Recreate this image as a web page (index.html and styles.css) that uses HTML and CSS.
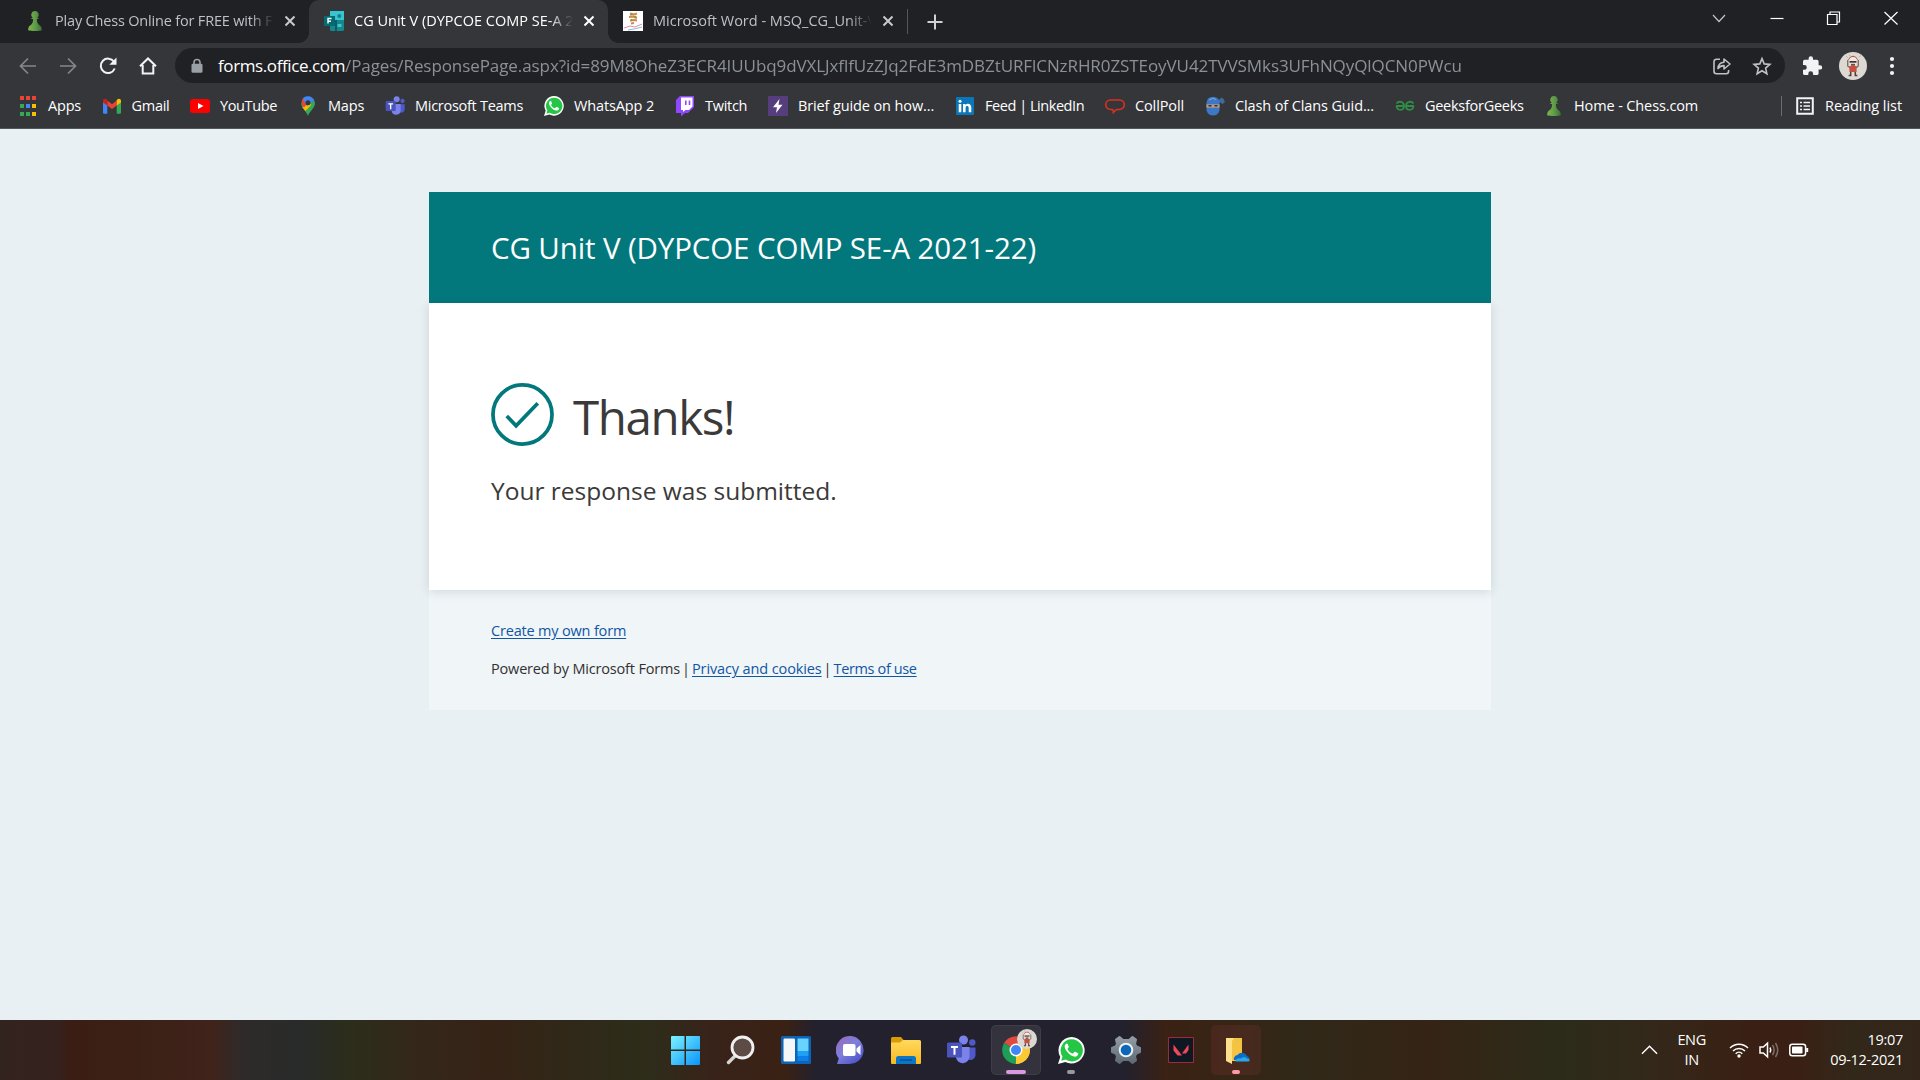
FILE: index.html
```html
<!DOCTYPE html>
<html lang="en">
<head>
<meta charset="utf-8">
<title>CG Unit V (DYPCOE COMP SE-A 2021-22)</title>
<link rel="stylesheet" href="styles.css">
</head>
<body>
<svg class="defs" width="0" height="0" aria-hidden="true">
  <defs>
    <linearGradient id="pawnFill" x1="0" x2="1"><stop offset="0" stop-color="#81b64c"/><stop offset=".55" stop-color="#5d9948"/><stop offset="1" stop-color="#3d6e33"/></linearGradient>
    <linearGradient id="winFill" x1="0" y1="0" x2="1" y2="1"><stop offset="0" stop-color="#7bf3ff"/><stop offset="1" stop-color="#0a94fa"/></linearGradient>
    <linearGradient id="chatFill" x1="0" y1="0" x2=".8" y2="1"><stop offset="0" stop-color="#9a68b4"/><stop offset=".5" stop-color="#7f7fdc"/><stop offset="1" stop-color="#4a50c8"/></linearGradient>
    <linearGradient id="folderFill" x1="0" y1="0" x2="0" y2="1"><stop offset="0" stop-color="#ffd95e"/><stop offset="1" stop-color="#f9b91e"/></linearGradient>
    <linearGradient id="gearFill" x1="0" y1="0" x2="0" y2="1"><stop offset="0" stop-color="#929da5"/><stop offset="1" stop-color="#5d6a73"/></linearGradient>
    <symbol id="pawn" viewBox="0 0 20 20">
      <path fill="url(#pawnFill)" d="M10 0a3.7 3.7 0 0 0-2.3 6.6L5.8 8.1h2.3c0 3-.5 4.700-3 6.500C3.700 15.700 3.200 17 3.200 19c0 .6 2.800 1 6.800 1s6.800-.4 6.800-1c0-2-.5-3.300-1.900-4.400-2.500-1.800-3-3.500-3-6.500h2.300l-1.900-1.500A3.700 3.700 0 0 0 10 0z"/>
    </symbol>
    <symbol id="teams" viewBox="0 0 30 30">
      <circle cx="26.300" cy="7.500" r="3.200" fill="#5059c9"/><path fill="#5059c9" d="M21 12.500h8.500v8a5 5 0 0 1-8.500 3z"/>
      <circle cx="17.500" cy="5" r="4.500" fill="#7b83eb"/><path fill="#7b83eb" d="M10 12h13.500v9.500a6.800 6.800 0 0 1-13.500 1z"/>
      <rect x="1" y="7.500" width="15" height="15" rx="1.200" fill="#4b53bc"/><path fill="#fff" d="M5 11h7v1.900H9.500v6.800h-2v-6.800H5z"/>
    </symbol>
    <symbol id="whatsapp" viewBox="0 0 24 24">
      <path fill="#fff" d="M12.200 0A11.800 11.800 0 0 0 2 17.700L0 24l6.500-1.700A11.800 11.800 0 1 0 12.200 0z"/>
      <path fill="#25c646" d="M12.200 2.100A9.800 9.800 0 0 0 4 17.300l-1.100 3.900 4-1.100A9.800 9.800 0 1 0 12.200 2.100z"/>
      <path fill="#fff" d="M8.600 6.300c-.4-.8-1.300-.5-1.900.2-1.200 1.300-.8 3.100 0 4.600 1.700 3 4 5.200 7.400 6.300 1.700.5 3.600-.5 3.900-2.200.1-.7-.1-.8-.6-1l-2.100-1c-.4-.2-.7-.1-1 .3l-.8 1c-.2.300-.500.300-.900.100-1.800-.8-3-1.900-4-3.600-.2-.4-.1-.6.200-.9l.7-.9c.2-.3.100-.5 0-.8z"/>
    </symbol>
    <symbol id="avatar" viewBox="0 0 28 28">
      <circle cx="14" cy="14" r="14" fill="#dcd8d2"/>
      <path d="M7 4l2 2M10 2.500l1 1.500M20 5l2-1.500" stroke="#bdb8b0" stroke-width="1"/>
      <path d="M9.500 8q1-3.500 4.500-3.800 3.500.3 4.500 3.800" fill="none" stroke="#b9473d" stroke-width="1"/>
      <circle cx="14" cy="9.300" r="4" fill="#efe9e4"/><path d="M10.500 9h7v1.700h-7z" fill="#42333a"/><path d="M12 11.800h4v2h-4z" fill="#7a4a3d"/>
      <path d="M8.700 8v6l2.500 2M19.300 8v6l-2.500 2" stroke="#7d6a66" stroke-width="1.300" fill="none"/>
      <path d="M10.400 14h7.200v6h-7.200z" fill="#c7503f"/>
      <path d="M11.700 20v3.500h-2M16.300 20v3.500h2" stroke="#563d3a" stroke-width="1.500" fill="none"/>
    </symbol>
  </defs>
</svg>

<header class="tabstrip">
  <div class="tab">
    <svg class="fav" viewBox="0 0 20 20"><use href="#pawn"/></svg>
    <span class="tab-title snug-2">Play Chess Online for FREE with F</span>
    <svg class="tab-close" viewBox="0 0 20 20"><path d="M5.500 5.500l9 9m0-9l-9 9"/></svg>
  </div>
  <div class="tab active">
    <svg class="fav" viewBox="0 0 20 20"><path fill="#37c6d0" d="M6 0h14v9H6z"/><path fill="#16878d" d="M6 9h14v9.500a1.500 1.500 0 0 1-1.500 1.500h-11A1.500 1.500 0 0 1 6 18.500z"/><path fill="#0c5c63" d="M11 9h2v11h-2z"/><circle cx="15.300" cy="5" r="2" fill="#158087"/><path fill="#37c6d0" d="M13.500 13h4v3h-4z"/><path fill="#036c70" d="M0 5h11v10H0z"/><path d="M4 12.500v-5h3.500M4 10.200h3" fill="none" stroke="#fff" stroke-width="1.400"/></svg>
    <span class="tab-title">CG Unit V (DYPCOE COMP SE-A 2</span>
    <svg class="tab-close" viewBox="0 0 20 20"><path d="M5.500 5.500l9 9m0-9l-9 9"/></svg>
  </div>
  <div class="tab">
    <svg class="fav" viewBox="0 0 20 20"><path fill="#fff" d="M0 0h20v20H0z"/><path d="M7 2.500l4 1 3-1M6 6l4-.5 4 1.500M7 9.500l4-.5 3 .5M8 12.500l3-.5" stroke="#c98a4a" stroke-width="1.900" fill="none"/><path d="M9 2.500l-1.500 2M13 5l-1.500 2M9 8l-1 2" stroke="#8a9a3a" stroke-width="1.300"/><path d="M1 17l6-2 5 1 7-3" stroke="#e58aa8" fill="none"/><path d="M5 19l6-1 8-2" stroke="#7fc0d8" fill="none"/></svg>
    <span class="tab-title">Microsoft Word - MSQ_CG_Unit-V</span>
    <svg class="tab-close" viewBox="0 0 20 20"><path d="M5.500 5.500l9 9m0-9l-9 9"/></svg>
  </div>
  <i class="tab-rule"></i>
  <svg class="new-tab" viewBox="0 0 20 20"><path d="M10 2.500v15M2.500 10h15"/></svg>
  <div class="window-controls">
    <svg viewBox="0 0 16 16"><path d="M2 5l6 6.500L14 5" stroke="#c4c5c8"/></svg>
    <svg viewBox="0 0 16 16"><path d="M1.500 8.500h13"/></svg>
    <svg viewBox="0 0 16 16"><path d="M1.500 4.500h9.500v10H1.500zM4 4.500v-2.500h9.500v10H11"/></svg>
    <svg viewBox="0 0 16 16"><path d="M1.500 2l13 12.500m0-12.500L1.500 14.500"/></svg>
  </div>
</header>

<nav class="toolbar">
  <svg class="nav-btn dim" viewBox="0 0 20 20"><path d="M18 10H2.500M10 2.500L2.500 10l7.500 7.500"/></svg>
  <svg class="nav-btn dim" viewBox="0 0 20 20"><path d="M2 10h15.500M10 2.500l7.500 7.500-7.500 7.500"/></svg>
  <svg class="nav-btn" viewBox="0 0 20 20"><path d="M16.700 12.500A7.200 7.200 0 1 1 16 5.800"/><path d="M18.500 1.500v7.200h-7.200z" fill="#f1f3f4" stroke="none"/></svg>
  <svg class="nav-btn" viewBox="0 0 20 20"><path d="M2 10.200L10 2.500l8 7.700M4.700 9v8.500h10.600V9"/></svg>
  <div class="omnibox">
    <svg class="lock" viewBox="0 0 14 16"><path d="M4 7V4.500a3 3 0 0 1 6 0V7" fill="none" stroke="#9aa0a6" stroke-width="1.600"/><rect x="1.500" y="5.800" width="11" height="9" rx="1.300" fill="#9aa0a6"/></svg>
    <span class="url"><span class="host">forms.office.com</span><span class="path">/Pages/ResponsePage.aspx?id=89M8OheZ3ECR4IUUbq9dVXLJxflfUzZJq2FdE3mDBZtURFlCNzRHR0ZSTEoyVU42TVVSMks3UFhNQyQlQCN0PWcu</span></span>
    <svg class="omni-icon" viewBox="0 0 20 20"><path d="M8 3.200H4.500a2.500 2.500 0 0 0-2.500 2.500v9.600a2.500 2.500 0 0 0 2.500 2.500h9.600a2.500 2.500 0 0 0 2.500-2.500V14"/><path d="M6 12.500c.3-4 2.500-6 6-6.200V3l6 5-6 5V9.600c-2.700 0-4.500.8-6 2.900z" stroke-linejoin="round"/></svg>
    <svg class="omni-icon" viewBox="0 0 20 20"><path d="M10 2.600l2.200 5.300 5.700.5-4.300 3.700 1.300 5.600-4.900-3-4.900 3 1.300-5.600-4.300-3.700 5.700-.5z"/></svg>
  </div>
  <svg class="puzzle" viewBox="0 0 22 22"><path fill="#f1f3f4" d="M19 10.200h-1.400V6.400a1.700 1.700 0 0 0-1.700-1.700H12V3.400a2.200 2.200 0 0 0-4.400 0v1.300H3.700A1.700 1.700 0 0 0 2 6.400V10h1.400a2.400 2.400 0 0 1 0 4.800H2v3.600a1.700 1.700 0 0 0 1.700 1.700h3.600v-1.400a2.400 2.400 0 0 1 4.800 0v1.400h3.800a1.700 1.700 0 0 0 1.700-1.700v-3.800H19a2.200 2.200 0 0 0 0-4.400z"/></svg>
  <svg class="profile" viewBox="0 0 28 28"><use href="#avatar"/></svg>
  <svg class="kebab" viewBox="0 0 6 20"><circle cx="3" cy="3" r="2.100"/><circle cx="3" cy="10" r="2.100"/><circle cx="3" cy="17" r="2.100"/></svg>
</nav>

<nav class="bookmarks">
  <a class="bm snug-2"><svg viewBox="0 0 20 20"><path fill="#ea4335" d="M2 0h4v4H2zM8 0h4v4H8zM14 0h4v4h-4z"/><path fill="#34a853" d="M2 8h4v4H2zM2 16h4v4H2zM8 16h4v4H8z"/><path fill="#4285f4" d="M8 8h4v4H8z"/><path fill="#fbbc04" d="M14 8h4v4h-4zM14 16h4v4h-4z"/></svg>Apps</a>
  <a class="bm snug-3"><svg viewBox="0 0 20 20"><path fill="#4285f4" d="M1 5v11.500c0 .8.600 1.300 1.300 1.300h3V8.500z"/><path fill="#34a853" d="M14.700 8.500v9.300h3c.7 0 1.300-.5 1.300-1.300V5z"/><path fill="#ea4335" d="M5.300 4.500L10 8.200l4.700-3.700v5L10 13l-4.700-3.500z"/><path fill="#c5221f" d="M1 5c0-2 2.200-2.800 3.700-1.500l.6.500v5.500L1 6.400z"/><path fill="#fbbc04" d="M19 5c0-2-2.200-2.800-3.700-1.500l-.6.500v5.500L19 6.400z"/></svg>Gmail</a>
  <a class="bm snug-4"><svg viewBox="0 0 20 20"><rect y="3" width="20" height="14" rx="3" fill="#f00"/><path fill="#fff" d="M8 7l5.500 3L8 13z"/></svg>YouTube</a>
  <a class="bm snug-2"><svg viewBox="0 0 20 20"><path fill="#34a853" d="M10 20c1-4.500 6.800-7 6.800-13H3.200C3.200 13 9 15.500 10 20z"/><path fill="#fbbc04" d="M4.500 11.500L12 3l2.500 4.500L7.500 15z"/><path fill="#ea4335" d="M4.800 2.500L10 7 6 11.500C3.500 9 2.700 5.500 4.800 2.500z"/><path fill="#4285f4" d="M4.800 2.500A6.800 6.800 0 0 1 16.300 4.500L9 10z"/><path fill="#34a853" d="M16.300 4.500c.9 2 .6 4.500-.8 6.500L12 7.500z"/><circle cx="10" cy="6.800" r="2.500" fill="#35363a"/></svg>Maps</a>
  <a class="bm snug-3"><svg viewBox="0 0 30 30"><use href="#teams"/></svg>Microsoft Teams</a>
  <a class="bm snug-1"><svg viewBox="0 0 24 24"><use href="#whatsapp"/></svg>WhatsApp 2</a>
  <a class="bm snug-3"><svg viewBox="0 0 20 20"><path fill="#9146ff" d="M5 0h14v11l-6 6h-3l-4 3.500V17H1V4z"/><path fill="#fff" d="M6 1.500h11.500v9L14 14h-3.500L8 16v-2H6z"/><path fill="#9146ff" d="M10 4.500h1.600V9H10zM13.700 4.500h1.600V9h-1.600z"/></svg>Twitch</a>
  <a class="bm snug-1"><svg viewBox="0 0 20 20"><path fill="#563d7c" d="M0 0h20v20H0z"/><path fill="#fff" d="M11.500 3L5 11.300h4L8 17l6.500-8.300h-4z"/></svg>Brief guide on how...</a>
  <a class="bm snug-5"><svg viewBox="0 0 20 20"><rect x="1" y="1" width="18" height="18" rx="1" fill="#0a77b8"/><path fill="#fff" d="M3.700 8h2.600v8.200H3.700zM8 8h2.500v1.200c1.500-2.300 5.800-1.800 5.800 2.300v4.700h-2.600v-4.300c0-2.500-3.100-2.300-3.100 0v4.300H8z"/><circle cx="5" cy="5.300" r="1.500" fill="#fff"/></svg>Feed | LinkedIn</a>
  <a class="bm snug-1"><svg viewBox="0 0 20 20"><path d="M8 13.500H5.500a4.800 4.800 0 0 1-4.800-4.800A4.800 4.800 0 0 1 5.500 4h9a4.800 4.800 0 0 1 4.800 4.700 4.800 4.800 0 0 1-4.800 4.800h-3L8.300 16.500v-3" fill="none" stroke="#e0301e" stroke-width="1.500"/></svg>CollPoll</a>
  <a class="bm snug-1"><svg viewBox="0 0 20 20"><path d="M12.500 4.500L17 1.500l1.500 1.500 1.500 3-2.500 2-2-1.500-2 1z" fill="#3f6a9c"/><path d="M1.500 7Q2 .8 8 .8T14.500 7v7.500q-1.500 5-6.500 5t-6.500-5z" fill="#3d78c4"/><path d="M1.500 8.300h13v3.400h-13z" fill="#b99a88"/><path d="M3.500 9.800h3M9.500 9.800h3" stroke="#332b33" stroke-width="1.500"/><path d="M4 4q4-3 7-.5" stroke="#78a9dd" fill="none"/></svg>Clash of Clans Guid...</a>
  <a class="bm snug-3"><svg viewBox="0 0 20 20"><g fill="none" stroke="#2f8d46" stroke-width="1.800"><path d="M1 10h8.300M1.600 7.600C3.500 4.500 9 5.500 9 10c0 4.800-6.800 5.300-7.500 0"/><path d="M19 10h-8.300M18.400 7.600C16.500 4.500 11 5.500 11 10c0 4.800 6.800 5.300 7.500 0"/></g></svg>GeeksforGeeks</a>
  <a class="bm snug-1"><svg viewBox="0 0 20 20"><use href="#pawn"/></svg>Home - Chess.com</a>
  <a class="reading"><svg viewBox="0 0 18 18"><path d="M1.200 1.200h15.600v15.600H1.200z" fill="none" stroke="#f1f3f4" stroke-width="2"/><path d="M4 5.500h2M4 9h2M4 12.500h2M7.500 5.500H14M7.500 9H14M7.500 12.500H14" stroke="#f1f3f4" stroke-width="1.600"/></svg>Reading list</a>
</nav>

<main class="page">
  <section class="form">
    <h1 class="form-title">CG Unit V (DYPCOE COMP SE-A 2021-22)</h1>
    <div class="card">
      <div class="thanks">
        <svg class="check" viewBox="0 0 64 64"><circle cx="32" cy="32" r="30"/><path d="M16 33.500l9.500 10L47.500 20.500"/></svg>
        <h2>Thanks!</h2>
      </div>
      <p class="message">Your response was submitted.</p>
    </div>
    <footer class="form-footer">
      <p><a class="link snug-2">Create my own form</a></p>
      <p><span class="snug-2">Powered by Microsoft Forms</span><span class="bar">|</span><a class="link snug-1">Privacy and cookies</a><span class="bar">|</span><a class="link snug-4">Terms of use</a></p>
    </footer>
  </section>
</main>

<footer class="taskbar">
  <div class="apps">
    <span class="app"><svg viewBox="0 0 30 30"><path fill="url(#winFill)" d="M0 2a1 1 0 0 1 1-1h12.500v13.500H0zM15 1h13a1 1 0 0 1 1 1v12.500H15zM0 16h13.500v14H1a1 1 0 0 1-1-1zM15 16h14v13a1 1 0 0 1-1 1H15z"/></svg></span>
    <span class="app"><svg viewBox="0 0 30 30"><path d="M9.500 20.500L2.500 27.500" stroke="#d5d5d5" stroke-width="3.400" stroke-linecap="round"/><circle cx="16.500" cy="12.500" r="10.500" fill="#5c4c45" stroke="#f0f0f0" stroke-width="2.800"/></svg></span>
    <span class="app"><svg viewBox="0 0 30 30"><rect y="1" width="30" height="28" rx="1.500" fill="#0d63b5"/><rect x="2.500" y="3.500" width="11.500" height="23" rx="1.200" fill="#f4f6f8"/><path fill="#69d3ff" d="M16.500 3.500h11V16h-11z"/><path fill="#1ea0f5" d="M16.500 16h11v5h-11z"/><path fill="#0a80e8" d="M16.500 21h11v5h-11z"/></svg></span>
    <span class="app"><svg viewBox="0 0 30 30"><path fill="url(#chatFill)" d="M15 1a14 14 0 1 1-3 28H1l1.800-5.500A14 14 0 0 1 15 1z"/><rect x="7" y="9" width="12.500" height="12" rx="1.800" fill="#fff"/><path fill="#fff" d="M20.500 13.500l4-3.500v10l-4-3.500z"/></svg></span>
    <span class="app"><svg viewBox="0 0 30 30"><path fill="#dc9a07" d="M0 3.500A1.500 1.500 0 0 1 1.500 2H10l3 3.500V12H0z"/><path fill="url(#folderFill)" d="M0 7.500h9L12 5h16.500A1.500 1.500 0 0 1 30 6.500V28a1 1 0 0 1-1 1H1a1 1 0 0 1-1-1z"/><path fill="#0b76c5" d="M5 29v-5.500a2.500 2.500 0 0 1 2.500-2.500h15a2.500 2.500 0 0 1 2.500 2.500V29z"/><path d="M9 25h12" stroke="#07508c" stroke-width="1.400"/></svg></span>
    <span class="app"><svg viewBox="0 0 30 30"><use href="#teams"/></svg></span>
    <span class="app open current"><svg viewBox="0 0 30 30"><path fill="#e04a3f" d="M15 15L3 8a14 14 0 0 1 24.100 0z"/><path fill="#fcc934" d="M15 15l12.100-7A14 14 0 0 1 15 29z"/><path fill="#1e9e57" d="M15 15v14A14 14 0 0 1 3 8z"/><path fill="#fcc934" d="M15 8.500h12.300A14 14 0 0 1 14.500 29l6-11z"/><circle cx="15" cy="15" r="6.500" fill="#fff"/><circle cx="15" cy="15" r="5" fill="#4285f4"/></svg><svg class="badge" viewBox="0 0 28 28"><use href="#avatar"/></svg><i class="mark wide"></i></span>
    <span class="app"><svg class="wa" viewBox="0 0 24 24"><use href="#whatsapp"/></svg><i class="mark grey"></i></span>
    <span class="app"><svg viewBox="0 0 30 30"><path fill="url(#gearFill)" stroke="url(#gearFill)" stroke-width="2" stroke-linejoin="round" d="M12 5l-3.500-3L5 4.500 6 9 4.500 11.500 1 13v4l3.500 1.500L6 21l-1 4.500L8.500 28l3.500-3h6l3.500 3 3.500-2.500-1-4.500 1.500-2.500L29 17v-4l-3.500-1.500L24 9l1-4.500L21.500 2 18 5z"/><circle cx="15" cy="15" r="6.300" fill="#0d67b8" stroke="#eef1f3" stroke-width="2"/></svg></span>
    <span class="app"><svg viewBox="0 0 30 30"><path fill="#0f1822" stroke="#9c2b3b" d="M2.500 2.500h25v25h-25z"/><path fill="#f0485a" d="M7.500 9.500l8.500 11h-4.500l-4-5zM22.500 9.500v5.500L20 18.500h-4z"/></svg></span>
    <span class="app open onedrive"><svg viewBox="0 0 30 30"><path fill="#f5c342" d="M5 3h16v23H5z"/><path fill="#ffe08a" d="M5 3h8l-2 3v23l-6-3z"/><path fill="#0d6cc4" d="M13 25a4 4 0 0 1 3.500-5 5.500 5.500 0 0 1 9.500 1 3.500 3.500 0 0 1 2 5z"/><path fill="#28a8ea" d="M14.500 26.500q.5-4 5-3 4-3 6.500 0 3 .3 2.500 2.700-3 .6-14 .3z"/></svg><i class="mark pink"></i></span>
  </div>
  <div class="tray">
    <svg class="chev" viewBox="0 0 18 12"><path d="M1 10l8-8 8 8"/></svg>
    <span class="lang snug-4">ENG<br>IN</span>
    <svg class="wifi" viewBox="0 0 20 16"><path d="M1 6a12.700 12.700 0 0 1 18 0M4 9a8.500 8.500 0 0 1 12 0M6.700 11.700a4.700 4.700 0 0 1 6.600 0"/><circle cx="10" cy="14" r="1.700" fill="#fff" stroke="none"/></svg>
    <svg class="vol" viewBox="0 0 20 18"><path d="M1 6h3.300L8.500 2.200v13.600L4.300 12H1zM11 6.500q1.500 2.500 0 5"/><path d="M13.500 4q3.300 5 0 10M16.500 2q4.500 7 0 14" opacity=".35"/></svg>
    <svg class="bat" viewBox="0 0 20 14"><rect x=".8" y="1.300" width="15.800" height="11.400" rx="2.500"/><rect x="3" y="3.500" width="10.500" height="7" rx=".8" fill="#fff" stroke="none"/><path d="M18.200 5v4" stroke-width="2"/></svg>
    <span class="clock snug-3">19:07<br>09-12-2021</span>
  </div>
</footer>
</body>
</html>
```
FILE: styles.css
```css
* { box-sizing: border-box; }
body {
  margin: 0;
  height: 1080px;
  overflow: hidden;
  display: flex;
  flex-direction: column;
  background: #e8f0f3;
  font: 14.5px/20px "Open Sans", "Noto Sans", sans-serif;
}
svg { display: block; flex: none; }
.defs { position: absolute; }
h1, h2, p { margin: 0; font-weight: 400; }

.snug-1 { letter-spacing: -0.12px; }
.snug-2 { letter-spacing: -0.18px; }
.snug-3 { letter-spacing: -0.28px; }
.snug-4 { letter-spacing: -0.37px; }
.snug-5 { letter-spacing: -0.45px; }

/* Tab strip */
.tabstrip {
  display: flex;
  align-items: center;
  height: 43px;
  padding-left: 10px;
  background: #202124;
  flex: none;
}
.tab {
  display: flex;
  align-items: center;
  width: 299px;
  height: 43px;
  padding: 0 0 1px 15px;
  color: #bdc1c6;
}
.tab.active {
  position: relative;
  background: #35363a;
  color: #fff;
  border-radius: 10px 10px 0 0;
}
.tab.active::before, .tab.active::after {
  content: "";
  position: absolute;
  bottom: 0;
  width: 10px;
  height: 10px;
}
.tab.active::before { left: -10px; background: radial-gradient(circle at 0 0, transparent 9.5px, #35363a 10px); }
.tab.active::after { right: -10px; background: radial-gradient(circle at 100% 0, transparent 9.5px, #35363a 10px); }
.fav { width: 20px; height: 20px; margin-right: 10px; }
.tab-title {
  width: 219px;
  white-space: nowrap;
  -webkit-mask-image: linear-gradient(90deg, #000 195px, transparent 219px);
  mask-image: linear-gradient(90deg, #000 195px, transparent 219px);
}
.tab-close { width: 20px; height: 20px; margin-left: 6px; stroke: #c8cacd; stroke-width: 2; fill: none; }
.active .tab-close { stroke: #fff; }
.tab-rule { width: 1px; height: 25px; background: #54565a; }
.new-tab { width: 20px; height: 20px; margin-left: 17px; stroke: #cfd1d4; stroke-width: 2; fill: none; }
.window-controls {
  display: grid;
  grid-template-columns: repeat(4, 57.4px);
  justify-items: center;
  margin-left: auto;
  padding-bottom: 7px;
}
.window-controls svg { width: 16px; height: 16px; fill: none; stroke: #fff; stroke-width: 1.2; }

/* Navigation bar */
.toolbar {
  display: flex;
  align-items: center;
  height: 45px;
  padding-left: 18px;
  background: #35363a;
  flex: none;
}
.nav-btn { width: 20px; height: 20px; margin-right: 20px; fill: none; stroke: #f1f3f4; stroke-width: 2; }
.nav-btn.dim { stroke: #85878b; stroke-width: 1.7; }
.nav-btn:nth-child(4) { margin-right: 17px; }
.omnibox {
  display: flex;
  align-items: center;
  width: 1610px;
  height: 35px;
  padding: 0 13px 0 15px;
  border-radius: 18px;
  background: #202124;
}
.lock { width: 14px; height: 18px; margin-right: 14px; }
.url { flex: 1; font-size: 17px; line-height: 30px; white-space: nowrap; }
.host { color: #fff; letter-spacing: -0.4px; }
.path { color: #9aa0a6; opacity: .88; letter-spacing: -0.08px; }
.omni-icon { width: 20px; height: 20px; margin-left: 20px; fill: none; stroke: #bfc1c5; stroke-width: 1.6; }
.puzzle { width: 22px; height: 22px; margin-left: 16px; }
.profile { width: 28px; height: 28px; margin-left: 16px; }
.kebab { width: 6px; height: 20px; margin-left: 22px; fill: #f1f3f4; }

/* Bookmarks bar */
.bookmarks {
  display: grid;
  grid-template-columns: 83.5px 88.5px 108px 87px 159px 131px 93px 187px 150px 100px 190px 149px 1fr auto;
  align-items: center;
  height: 41px;
  padding: 0 18px 4px;
  background: #35363a;
  border-bottom: 1px solid #54565a;
  color: #fff;
  flex: none;
}
.bm { display: flex; align-items: center; gap: 10px; white-space: nowrap; }
.bm svg { width: 20px; height: 20px; }
.reading {
  display: flex;
  align-items: center;
  gap: 11px;
  height: 20px;
  padding-left: 14px;
  border-left: 1px solid #6a6c70;
  letter-spacing: -0.05px;
}
.reading svg { width: 18px; height: 18px; }

/* Form page */
.page { flex: 1; padding-top: 63px; }
.form { width: 1062px; margin: 0 auto; }
.form-title {
  height: 111px;
  padding: 35px 62px;
  background: #03787c;
  color: #fff;
  font-size: 29.5px;
  line-height: 42px;
  letter-spacing: -0.12px;
}
.card {
  position: relative;
  height: 287px;
  padding: 80px 62px 0;
  background: #fff;
  color: #3b3a39;
  box-shadow: 0 2px 10px rgba(0, 30, 30, .13);
}
.thanks { display: flex; align-items: center; gap: 19px; height: 63px; }
.check { width: 63px; height: 63px; fill: none; stroke: #03787c; stroke-width: 3.8; }
.thanks h2 { padding-top: 4px; font-size: 47.5px; line-height: 60px; letter-spacing: -1.4px; }
.message { margin-top: 28px; font-size: 24.5px; line-height: 34px; }
.form-footer { height: 120px; padding: 31px 62px 0; background: #f0f5f8; color: #323130; }
.form-footer p { height: 20px; margin-bottom: 18px; white-space: nowrap; }
.link { color: #1155a3; text-decoration: underline; text-underline-offset: 2px; }
.bar { display: inline-block; width: 12px; text-align: center; }

/* Taskbar */
.taskbar {
  display: grid;
  grid-template-columns: 1fr auto 1fr;
  height: 60px;
  flex: none;
  color: #fff;
  background: linear-gradient(90deg, #33231f 0, #35221e 56px, #3b1d13 72px, #3c2117 150px, #40231a 212px, #2f2a2a 240px, #282b2a 300px, #2c2d1a 350px, #34271a 420px, #352316 490px, #302818 570px, #2d2d1a 645px, #38231a 710px, #3a2114 785px, #23212d 815px, #23212d 1125px, #3a2114 1165px, #362616 1240px, #302818 1300px, #352416 1430px, #2c2b19 1560px, #33281a 1650px, #3a2014 1750px, #3a2014 1800px, #32281a 1850px, #33251a 1920px);
}
.apps { grid-column: 2; display: flex; align-items: center; gap: 5px; padding-left: 2px; }
.app { position: relative; display: grid; place-items: center; width: 50px; height: 50px; border-radius: 5px; }
.app svg { width: 30px; height: 30px; }
.app .wa { width: 27px; height: 27px; }
.open { border: 1px solid rgba(255, 255, 255, .06); }
.current { background: rgba(255, 255, 255, .08); }
.onedrive { background: rgba(255, 80, 110, .09); border-color: transparent; }
.app .badge { position: absolute; left: 25px; top: 3px; width: 20px; height: 20px; }
.mark { position: absolute; bottom: 0; left: 50%; width: 8px; height: 4px; margin-left: -4px; border-radius: 2px; }
.mark.wide { width: 20px; margin-left: -10px; background: #d79ae0; }
.mark.grey { bottom: 1px; background: #9a979c; }
.mark.pink { background: #ff99a4; }
.tray { display: flex; align-items: center; justify-content: flex-end; padding-right: 17px; }
.tray svg { fill: none; stroke: #fff; stroke-width: 1.5; }
.chev { width: 17px; height: 12px; margin-right: 19px; }
.lang { width: 29px; text-align: center; margin-right: 23px; }
.wifi { width: 20px; height: 16px; margin-right: 10px; }
.vol { width: 20px; height: 18px; margin-right: 10px; }
.bat { width: 20px; height: 14px; margin-right: 21px; }
.clock { text-align: right; }
```
